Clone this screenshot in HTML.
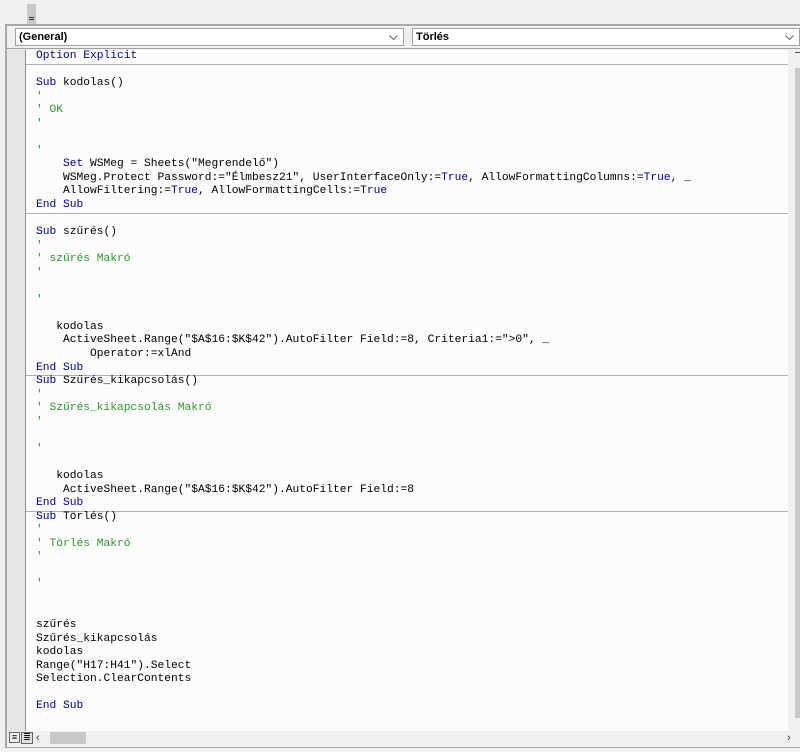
<!DOCTYPE html>
<html><head><meta charset="utf-8"><style>
body{margin:0;width:800px;height:752px;background:#f0f0f0;position:relative;overflow:hidden;font-family:"Liberation Sans",sans-serif}
.a{position:absolute}
.combo{position:absolute;top:28px;height:18px;background:#fff;border:1px solid #a0a0a0;box-sizing:border-box;font-size:11px;font-weight:bold;line-height:16px;padding-left:3px;color:#000}
.combo svg{position:absolute;right:5px;top:6px}
#code{position:absolute;left:26px;top:50px;width:762px;height:681px;background:#fcfcfc;font-family:"Liberation Mono",monospace;font-size:11.25px;color:#000;overflow:hidden}
.l{height:13.55px;line-height:13.55px;padding-left:10px;white-space:pre;box-sizing:border-box}
.k{color:#00008b}
.c{color:#2a9a2a}
.sep{box-shadow:0 1px 0 #b0b0b0}
</style></head><body>
<div class="a" style="left:27px;top:4px;width:9px;height:21px;background:#c8c8c8"></div>
<div class="a" style="left:29px;top:17px;width:5px;height:1px;background:#333"></div>
<div class="a" style="left:29px;top:19px;width:5px;height:1px;background:#333"></div>
<div class="a" style="left:5px;top:24px;width:795px;height:724px;border-top:2px solid #a8a8a8;border-left:2px solid #a8a8a8;border-bottom:1px solid #a8a8a8;box-sizing:border-box"></div>
<div class="combo" style="left:15px;width:389px">(General)<svg width="9" height="5"><path d="M0.5 0.5L4.5 4.5L8.5 0.5" fill="none" stroke="#666"/></svg></div>
<div class="combo" style="left:412px;width:388px">Törlés<svg width="9" height="5"><path d="M0.5 0.5L4.5 4.5L8.5 0.5" fill="none" stroke="#666"/></svg></div>
<div class="a" style="left:7px;top:48px;width:793px;height:1px;background:#a0a0a0"></div>
<div class="a" style="left:7px;top:50px;width:18px;height:681px;background:#e6e6e6;border-right:1px solid #909090"></div>
<div id="code">
<div class="l sep"><span class="k">Option Explicit</span></div>
<div class="l"> </div>
<div class="l"><span class="k">Sub</span> kodolas()</div>
<div class="l c">'</div>
<div class="l c">' OK</div>
<div class="l c">'</div>
<div class="l"> </div>
<div class="l c">'</div>
<div class="l">    <span class="k">Set</span> WSMeg = Sheets("Megrendelő")</div>
<div class="l">    WSMeg.Protect Password:="Élmbesz21", UserInterfaceOnly:=<span class="k">True</span>, AllowFormattingColumns:=<span class="k">True</span>, _</div>
<div class="l">    AllowFiltering:=<span class="k">True</span>, AllowFormattingCells:=<span class="k">True</span></div>
<div class="l sep"><span class="k">End Sub</span></div>
<div class="l"> </div>
<div class="l"><span class="k">Sub</span> szűrés()</div>
<div class="l c">'</div>
<div class="l c">' szűrés Makró</div>
<div class="l c">'</div>
<div class="l"> </div>
<div class="l c">'</div>
<div class="l"> </div>
<div class="l">   kodolas</div>
<div class="l">    ActiveSheet.Range("$A$16:$K$42").AutoFilter Field:=8, Criteria1:="&gt;0", _</div>
<div class="l">        Operator:=xlAnd</div>
<div class="l sep"><span class="k">End Sub</span></div>
<div class="l"><span class="k">Sub</span> Szűrés_kikapcsolás()</div>
<div class="l c">'</div>
<div class="l c">' Szűrés_kikapcsolás Makró</div>
<div class="l c">'</div>
<div class="l"> </div>
<div class="l c">'</div>
<div class="l"> </div>
<div class="l">   kodolas</div>
<div class="l">    ActiveSheet.Range("$A$16:$K$42").AutoFilter Field:=8</div>
<div class="l sep"><span class="k">End Sub</span></div>
<div class="l"><span class="k">Sub</span> Törlés()</div>
<div class="l c">'</div>
<div class="l c">' Törlés Makró</div>
<div class="l c">'</div>
<div class="l"> </div>
<div class="l c">'</div>
<div class="l"> </div>
<div class="l"> </div>
<div class="l">szűrés</div>
<div class="l">Szűrés_kikapcsolás</div>
<div class="l">kodolas</div>
<div class="l">Range("H17:H41").Select</div>
<div class="l">Selection.ClearContents</div>
<div class="l"> </div>
<div class="l"><span class="k">End Sub</span></div>
</div>
<div class="a" style="left:788px;top:50px;width:12px;height:681px;background:#f0f0f0"></div>
<div class="a" style="left:795px;top:52px;width:5px;height:1px;background:#555"></div>
<div class="a" style="left:795px;top:68px;width:5px;height:650px;background:#c8c8c8"></div>
<div class="a" style="left:7px;top:731px;width:793px;height:14px;background:#f0f0f0"></div>
<div class="a" style="left:9px;top:732px;width:11px;height:11px;border:1px solid #666;box-sizing:border-box;font-size:9px;line-height:8px;text-align:center">≡</div>
<div class="a" style="left:21px;top:732px;width:12px;height:12px;border:1px solid #666;box-sizing:border-box;background:#e0e0e0;font-size:9px;line-height:9px;text-align:center">≣</div>
<div class="a" style="left:36px;top:732px;font-size:11px;color:#333">‹</div>
<div class="a" style="left:50px;top:732px;width:36px;height:12px;background:#c8c8c8"></div>
<div class="a" style="left:787px;top:732px;font-size:11px;color:#333">›</div>
</body></html>
